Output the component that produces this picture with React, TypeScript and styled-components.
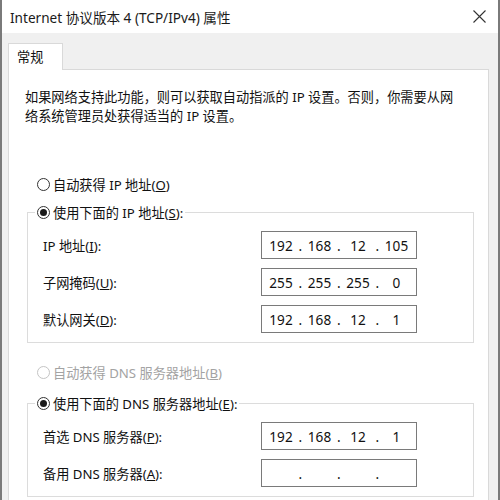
import React from 'react';
import styled, { createGlobalStyle } from 'styled-components';

const GlobalStyle = createGlobalStyle`
    html, body {
        margin: 0;
        padding: 0;
        background: #ffffff;
    }
    body {
        font-family: 'Noto Sans', 'Noto Sans CJK SC', sans-serif;
        color: #111111;
    }
`;

const Window = styled.div`
    box-sizing: border-box;
    width: 500px;
    height: 500px;
    overflow: hidden;
    border-left: 2px solid #7a7a7a;
    border-right: 2px solid #7a7a7a;
    background: #f0f0f0;
`;

const TitleBar = styled.div`
    height: 33px;
    background: #ffffff;
    display: flex;
    align-items: center;
    justify-content: space-between;
    padding: 0 12px 0 8px;
`;

const Title = styled.span`
    font-size: 13.6px;
    color: #1a1a1a;
`;

const Body = styled.div`
    padding: 10px 9px 0 6px;
`;

const TabStrip = styled.div`
    display: flex;
`;

const Tab = styled.div`
    box-sizing: border-box;
    width: 55px;
    height: 27px;
    padding-left: 8px;
    line-height: 26px;
    font-size: 13.2px;
    background: #ffffff;
    border: 1px solid #d9d9d9;
    border-bottom: none;
    margin-bottom: -1px;
    position: relative;
    z-index: 1;
`;

const Panel = styled.div`
    background: #ffffff;
    border: 1px solid #d9d9d9;
    padding: 18px 14px 20px 16px;
    height: 480px;
`;

const Description = styled.p`
    margin: 0;
    font-size: 13.2px;
    line-height: 19px;
`;

const OptionBlock = styled.div<{ $top: number }>`
    margin: ${(p) => p.$top}px 0 0 2px;
`;

const RadioRow = styled.div<{ $disabled?: boolean }>`
    display: flex;
    align-items: center;
    height: 20px;
    padding-left: 10px;
    font-size: 13.2px;
    color: ${(p) => (p.$disabled ? '#a3a3a3' : '#111111')};
`;

const RadioCircle = styled.span<{ $checked?: boolean; $disabled?: boolean }>`
    box-sizing: border-box;
    width: 13px;
    height: 13px;
    border-radius: 50%;
    border: 1px solid ${(p) => (p.$disabled ? '#c4c4c4' : '#333333')};
    background: #ffffff;
    margin-right: 3px;
    display: flex;
    align-items: center;
    justify-content: center;
    &::after {
        content: '';
        width: 7px;
        height: 7px;
        border-radius: 50%;
        background: #1a1a1a;
        display: ${(p) => (p.$checked ? 'block' : 'none')};
    }
`;

const Group = styled.fieldset<{ $gap: number }>`
    margin: ${(p) => p.$gap}px 0 0 0;
    padding: 9px 0 9px 15px;
    border: 1px solid #dcdcdc;
    min-inline-size: 0;
`;

const Legend = styled.legend`
    margin-left: -8px;
    padding: 0 2px;
    height: 20px;
    display: flex;
    align-items: center;
    font-size: 13.2px;
`;

const Fields = styled.div`
    display: grid;
    grid-template-columns: 218px 156px;
    row-gap: 9px;
    align-items: center;
`;

const FieldLabel = styled.span`
    font-size: 13.2px;
`;

const IpBox = styled.div`
    box-sizing: border-box;
    width: 156px;
    height: 28px;
    border: 1px solid #7a7a7a;
    display: flex;
    align-items: center;
    padding-left: 5px;
    font-size: 13.6px;
    color: #111111;
`;

const Octet = styled.span`
    width: 28px;
    text-align: center;
`;

const Dot = styled.span`
    width: 10.5px;
    text-align: center;
`;

const CloseIcon = () => (
    <svg width="13" height="13" viewBox="0 0 13 13">
        <path d="M0.5 0.5 L12.5 12.5 M12.5 0.5 L0.5 12.5" stroke="#333" strokeWidth="1.1" fill="none" />
    </svg>
);

function Radio({ checked, disabled, children }: { checked?: boolean; disabled?: boolean; children: React.ReactNode }) {
    return (
        <>
            <RadioCircle $checked={checked} $disabled={disabled} />
            <span>{children}</span>
        </>
    );
}

function IpField({ octets }: { octets: string[] }) {
    return (
        <IpBox>
            {octets.map((o, i) => (
                <React.Fragment key={i}>
                    <Octet>{o}</Octet>
                    {i < 3 && <Dot>.</Dot>}
                </React.Fragment>
            ))}
        </IpBox>
    );
}

export default function App() {
    return (
        <>
            <GlobalStyle />
            <Window>
                <TitleBar>
                    <Title>Internet 协议版本 4 (TCP/IPv4) 属性</Title>
                    <CloseIcon />
                </TitleBar>
                <Body>
                    <TabStrip>
                        <Tab>常规</Tab>
                    </TabStrip>
                    <Panel>
                        <Description>
                            如果网络支持此功能，则可以获取自动指派的 IP 设置。否则，你需要从网
                            <br />
                            络系统管理员处获得适当的 IP 设置。
                        </Description>

                        <OptionBlock $top={48}>
                            <RadioRow>
                                <Radio>自动获得 IP 地址(<u>O</u>)</Radio>
                            </RadioRow>
                            <Group $gap={8}>
                                <Legend>
                                    <Radio checked>使用下面的 IP 地址(<u>S</u>):</Radio>
                                </Legend>
                                <Fields>
                                    <FieldLabel>IP 地址(<u>I</u>):</FieldLabel>
                                    <IpField octets={['192', '168', '12', '105']} />
                                    <FieldLabel>子网掩码(<u>U</u>):</FieldLabel>
                                    <IpField octets={['255', '255', '255', '0']} />
                                    <FieldLabel>默认网关(<u>D</u>):</FieldLabel>
                                    <IpField octets={['192', '168', '12', '1']} />
                                </Fields>
                            </Group>
                        </OptionBlock>

                        <OptionBlock $top={19}>
                            <RadioRow $disabled>
                                <Radio disabled>自动获得 DNS 服务器地址(<u>B</u>)</Radio>
                            </RadioRow>
                            <Group $gap={11}>
                                <Legend>
                                    <Radio checked>使用下面的 DNS 服务器地址(<u>E</u>):</Radio>
                                </Legend>
                                <Fields>
                                    <FieldLabel>首选 DNS 服务器(<u>P</u>):</FieldLabel>
                                    <IpField octets={['192', '168', '12', '1']} />
                                    <FieldLabel>备用 DNS 服务器(<u>A</u>):</FieldLabel>
                                    <IpField octets={['', '', '', '']} />
                                </Fields>
                            </Group>
                        </OptionBlock>
                    </Panel>
                </Body>
            </Window>
        </>
    );
}
